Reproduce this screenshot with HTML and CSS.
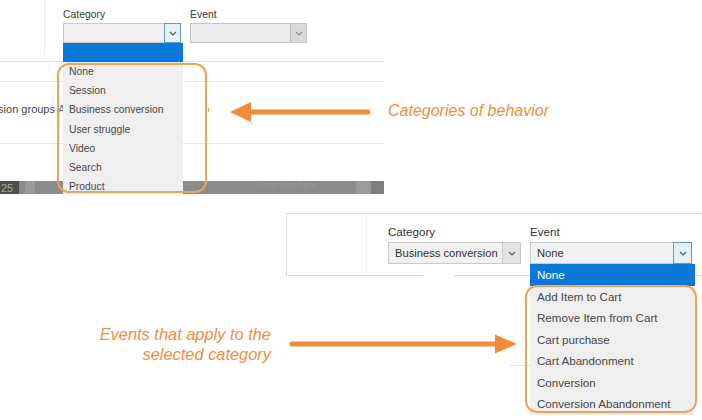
FILE: index.html
```html
<!DOCTYPE html>
<html lang="en">
<head>
  <meta charset="UTF-8">
  <meta name="viewport" content="width=device-width, initial-scale=1.0">
  <title>Behavior categories and events</title>
  <link rel="stylesheet" href="styles.css">
</head>
<body>
  <div class="canvas">

    <!-- first capture: category list open -->
    <div class="shot shot-top">
      <div class="filter-bar">
        <div class="side"></div>
        <div class="field field-cat">
          <label>Category</label>
          <div class="select">
            <span class="value"></span>
            <span class="caret focus">
              <svg width="8" height="5" viewBox="0 0 8 5"><path d="M1 1 L4 4 L7 1" /></svg>
            </span>
          </div>
        </div>
        <div class="field field-event">
          <label>Event</label>
          <div class="select disabled">
            <span class="value"></span>
            <span class="caret">
              <svg width="8" height="5" viewBox="0 0 8 5"><path d="M1 1 L4 4 L7 1" /></svg>
            </span>
          </div>
        </div>
      </div>
      <div class="row row-empty"></div>
      <div class="row row-groups">
        <div class="clip">Conversion groups</div>
        <span class="link">Add</span>
        <span class="mark"></span>
      </div>
      <div class="row row-blank"></div>
      <div class="status-bar">
        <span class="seg seg-page">25</span>
        <span class="seg seg-a"></span>
        <span class="seg seg-b"></span>
        <span class="seg seg-fill"></span>
        <span class="seg seg-text">Drop files here</span>
        <span class="seg seg-c"></span>
        <span class="seg seg-d"></span>
        <span class="seg seg-e"></span>
      </div>

      <div class="dropdown dropdown-top">
        <div class="opt selected">&nbsp;</div>
        <div class="opt">None</div>
        <div class="opt">Session</div>
        <div class="opt">Business conversion</div>
        <div class="opt">User struggle</div>
        <div class="opt">Video</div>
        <div class="opt">Search</div>
        <div class="opt">Product</div>
      </div>
      <div class="ring ring-top"></div>
    </div>

    <!-- second capture: event list open -->
    <div class="shot shot-bottom">
      <div class="panel">
        <div class="side"></div>
        <div class="field field-cat">
          <label>Category</label>
          <div class="select">
            <span class="value">Business conversion</span>
            <span class="caret">
              <svg width="8" height="5" viewBox="0 0 8 5"><path d="M1 1 L4 4 L7 1" /></svg>
            </span>
          </div>
        </div>
        <div class="field field-event">
          <label>Event</label>
          <div class="select">
            <span class="value">None</span>
            <span class="caret focus">
              <svg width="8" height="5" viewBox="0 0 8 5"><path d="M1 1 L4 4 L7 1" /></svg>
            </span>
          </div>
        </div>
      </div>
      <div class="panel-edge"></div>
      <div class="spacer">
        <div class="rule"></div>
      </div>
      <div class="status-bar thin">
        <span class="seg seg-dark"></span>
        <span class="seg seg-mid"></span>
        <span class="seg seg-fill"></span>
      </div>

      <div class="dropdown dropdown-bottom">
        <div class="opt selected">None</div>
        <div class="opt">Add Item to Cart</div>
        <div class="opt">Remove Item from Cart</div>
        <div class="opt">Cart purchase</div>
        <div class="opt">Cart Abandonment</div>
        <div class="opt">Conversion</div>
        <div class="opt">Conversion Abandonment</div>
      </div>
      <div class="ring ring-bottom"></div>
    </div>

    <!-- annotations -->
    <svg class="arrow arrow-left" width="145" height="25" viewBox="0 0 145 25">
      <line x1="20" y1="12" x2="140" y2="12" />
      <polygon points="2,12 23,2 23,22" />
    </svg>
    <div class="note note-top">Categories of behavior</div>

    <svg class="arrow arrow-right" width="232" height="23" viewBox="0 0 232 23">
      <line x1="4" y1="11" x2="210" y2="11" />
      <polygon points="207,1.5 229,11 207,20.5" />
    </svg>
    <div class="note note-bottom">Events that apply to the<br>selected category</div>

  </div>
</body>
</html>
```

FILE: styles.css
```css
body {
  margin: 0;
  background: #ffffff;
  font-family: "Liberation Sans", Arial, sans-serif;
  color: #333333;
}
.canvas {
  position: relative;
  width: 702px;
  height: 420px;
  overflow: hidden;
  background: #ffffff;
}
.shot {
  position: absolute;
  overflow: hidden;
  background: #ffffff;
}

/* ---------- top capture ---------- */
.shot-top {
  left: 0;
  top: 0;
  width: 384px;
  height: 194px;
}
.filter-bar {
  display: flex;
  height: 61px;
  border-bottom: 1px solid #e4e4e4;
}
.filter-bar .side {
  width: 44px;
  height: 54px;
  border-right: 1px solid #ededed;
}
.shot-top .field-cat {
  width: 118px;
  margin-left: 18px;
}
.shot-top .field-event {
  width: 117px;
  margin-left: 9px;
}
.shot-top label {
  display: block;
  margin-top: 8px;
  height: 13px;
  font-size: 10.4px;
  line-height: 13px;
  color: #3a3a3a;
}
.select {
  display: flex;
  box-sizing: border-box;
  height: 20px;
  margin-top: 2px;
  border: 1px solid #cacaca;
  background: #f1f1f1;
}
.select .value {
  flex: 1;
  padding-left: 6px;
  white-space: nowrap;
  overflow: hidden;
}
.caret {
  display: flex;
  align-items: center;
  justify-content: center;
  width: 15px;
  border-left: 1px solid #cacaca;
  background: #e4e4e4;
}
.caret svg path {
  fill: none;
  stroke: #555555;
  stroke-width: 1.1;
}
.caret.focus {
  margin: -1px -1px -1px 0;
  border: 1px solid #5b9bd5;
  background: #e4f0fb;
}
.select.disabled {
  background: #ececec;
  border-color: #c4c4c4;
}
.select.disabled .caret {
  background: #dadada;
  border-left-color: #b9b9b9;
}
.select.disabled .caret svg path {
  stroke: #888888;
}

.row {
  border-bottom: 1px solid #e6e6e6;
}
.row-empty {
  height: 19px;
}
.row-groups {
  display: flex;
  align-items: flex-start;
  height: 41px;
  padding-top: 20px;
  font-size: 11px;
  line-height: 14px;
  color: #444444;
}
.clip {
  display: flex;
  justify-content: flex-end;
  width: 55px;
  overflow: hidden;
  white-space: nowrap;
}
.link {
  margin-left: 3px;
  color: #3b78c4;
}
.mark {
  width: 1px;
  height: 4px;
  margin: 6px 0 0 130px;
  background: #f0a060;
}
.row-blank {
  height: 37px;
  border-bottom: none;
}
.status-bar {
  display: flex;
  height: 13px;
  background: #8b8b8b;
}
.seg {
  display: block;
  height: 100%;
}
.seg-page {
  width: 19px;
  background: #4e4e4e;
  color: #a8a8a8;
  font-size: 11px;
  line-height: 15px;
  padding-left: 1px;
  box-sizing: border-box;
  overflow: hidden;
}
.seg-a {
  width: 6px;
}
.seg-b {
  width: 10px;
  background: #9a9a9a;
}
.seg-fill {
  flex: 1;
}
.seg-text {
  width: 92px;
  font-size: 9px;
  line-height: 9px;
  color: #979797;
  white-space: nowrap;
  overflow: hidden;
}
.seg-c {
  width: 6px;
}
.seg-d {
  width: 15px;
  background: #9b9b9b;
}
.seg-e {
  width: 13px;
  background: #7e7e7e;
}

.dropdown {
  position: absolute;
  background: #efefef;
  color: #474747;
}
.opt {
  white-space: nowrap;
}
.opt.selected {
  background: #0a78d7;
  color: #ffffff;
}
.dropdown-top {
  left: 63px;
  top: 43px;
  width: 120px;
  font-size: 10.3px;
}
.dropdown-top .opt {
  height: 19.2px;
  line-height: 19.2px;
  padding-left: 6px;
}
.dropdown-top .opt.selected {
  height: 19px;
}
.ring {
  position: absolute;
  box-sizing: border-box;
  border: 2px solid #f0a25c;
  border-radius: 12px;
}
.ring-top {
  left: 57px;
  top: 63px;
  width: 150px;
  height: 130px;
}

/* ---------- bottom capture ---------- */
.shot-bottom {
  left: 283px;
  top: 205px;
  width: 419px;
  height: 215px;
}
.panel {
  display: flex;
  height: 61px;
  margin: 8px 0 0 3px;
  border-top: 1px solid #dcdcdc;
  border-left: 1px solid #dcdcdc;
}
.panel .side {
  width: 79px;
  margin: 2px 0;
  border-right: 1px solid #efefef;
}
.shot-bottom .field-cat {
  width: 133px;
  margin-left: 21px;
}
.shot-bottom .field-event {
  width: 162px;
  margin-left: 9px;
}
.shot-bottom label {
  display: block;
  margin-top: 11px;
  height: 14px;
  font-size: 11.6px;
  line-height: 14px;
  color: #333333;
}
.shot-bottom .select {
  height: 22px;
  margin-top: 3px;
  font-size: 11.2px;
  line-height: 20px;
  color: #333333;
}
.shot-bottom .caret {
  width: 17px;
}
.panel-edge {
  height: 1px;
  margin-left: 3px;
  background: linear-gradient(to right, #dcdcdc 0, #dcdcdc 137px, transparent 137px, transparent 168px, #dcdcdc 168px);
}
.spacer {
  height: 133px;
}
.rule {
  margin: 89px 0 0 227px;
  width: 30px;
  border-top: 1px solid #e6e6e6;
}
.status-bar.thin {
  height: 4px;
  background: #aaaaaa;
}
.seg-dark {
  width: 55px;
  background: #333333;
}
.seg-mid {
  width: 42px;
  background: #9a9a9a;
}
.dropdown-bottom {
  left: 247px;
  top: 59px;
  width: 165px;
  height: 151px;
  font-size: 11.6px;
}
.dropdown-bottom .opt {
  height: 21.4px;
  line-height: 21.4px;
  padding-left: 7px;
}
.dropdown-bottom .opt.selected {
  height: 22px;
  line-height: 22px;
}
.ring-bottom {
  left: 242px;
  top: 80px;
  width: 172px;
  height: 128px;
}

/* ---------- annotations ---------- */
.arrow {
  position: absolute;
}
.arrow line {
  stroke: #f28a37;
  stroke-width: 5;
  stroke-linecap: round;
}
.arrow polygon {
  fill: #f28a37;
}
.arrow-left {
  left: 228px;
  top: 100px;
}
.arrow-right {
  left: 288px;
  top: 333px;
}
.note {
  position: absolute;
  font-style: italic;
  font-size: 16px;
  line-height: 20px;
  color: #ef8e40;
  white-space: nowrap;
}
.note-top {
  left: 388px;
  top: 101px;
}
.note-bottom {
  left: 0;
  top: 324px;
  width: 271px;
  font-size: 16.4px;
  text-align: right;
}
```
